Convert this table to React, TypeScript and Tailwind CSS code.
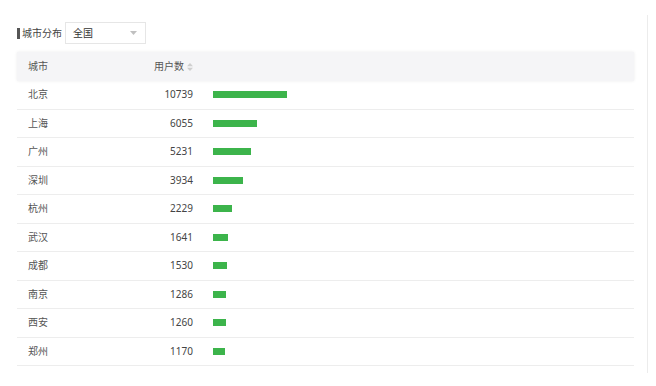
import React from "react";

const data: [string, number][] = [
  ["北京", 10739],
  ["上海", 6055],
  ["广州", 5231],
  ["深圳", 3934],
  ["杭州", 2229],
  ["武汉", 1641],
  ["成都", 1530],
  ["南京", 1286],
  ["西安", 1260],
  ["郑州", 1170],
];

const font = { fontFamily: '"Noto Sans", "Noto Sans CJK SC", sans-serif' };

export default function App() {
  return (
    <div className="w-[656px] h-[386px] bg-white" style={font}>
      <div className="w-[648px] h-[373px] pt-[15px]">
        <div className="h-[358px] border-r border-[#ececec] pl-[17px] pt-[7px]">
          <div className="flex items-center h-[22px]">
            <div className="w-[3px] h-[11px] bg-[#555]" />
            <span className="ml-[2px] text-[10px] text-[#444] leading-none">城市分布</span>
            <div className="ml-[3px] w-[81px] h-[22px] border border-[#e6e6e6] flex items-center pl-[7px] pr-[8px] justify-between">
              <span className="text-[10px] text-[#333] leading-none">全国</span>
              <svg width="7" height="4" viewBox="0 0 7 4">
                <path d="M0 0 L7 0 L3.5 4 Z" fill="#c0c0c0" />
              </svg>
            </div>
          </div>
          <div className="mt-[8px] w-[617px]">
            <div className="h-[29px] bg-[#f5f5f7] flex items-center text-[10px] text-[#555] shadow-[0_0_3px_rgba(0,0,0,0.08)]">
              <div className="w-[100px] pl-[11px]">城市</div>
              <div className="w-[76px] flex items-center justify-end gap-[3px]">
                <span>用户数</span>
                <svg width="6" height="8" viewBox="0 0 6 8">
                  <path d="M0 3.2 L3 0 L6 3.2 Z" fill="#cfcfcf" />
                  <path d="M0 4.8 L3 8 L6 4.8 Z" fill="#cfcfcf" />
                </svg>
              </div>
            </div>
            {data.map(([city, v]) => (
              <div key={city} className="h-[28.5px] flex items-center border-b border-[#ededed] text-[10px]">
                <div className="w-[100px] pl-[11px] text-[#555]">{city}</div>
                <div className="w-[76px] text-right text-[#444]">{v}</div>
                <div
                  className="ml-[20px] h-[7px] bg-[#3cb44b]"
                  style={{ width: `${4.4 + v * 0.00648}px` }}
                />
              </div>
            ))}
          </div>
        </div>
      </div>
    </div>
  );
}
